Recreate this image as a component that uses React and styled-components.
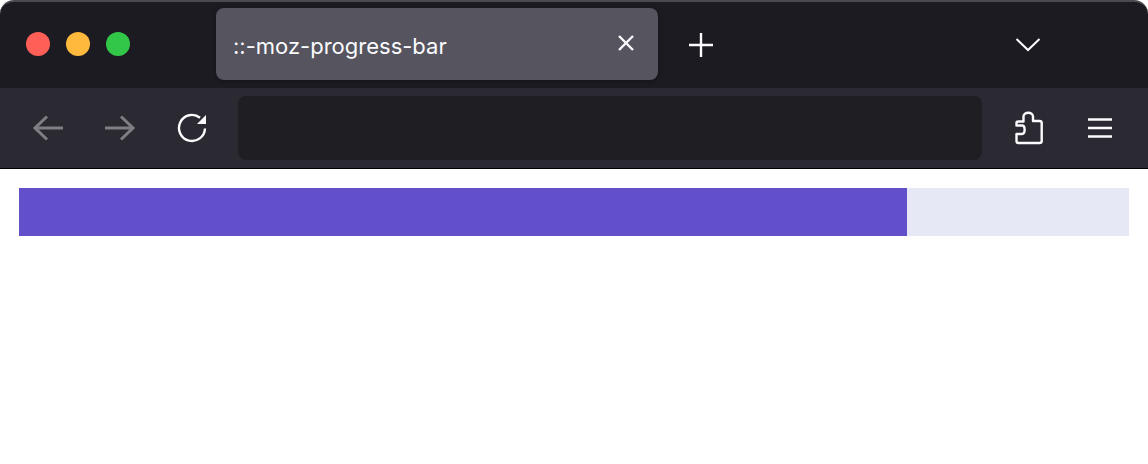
import React from "react";
import styled, { createGlobalStyle } from "styled-components";

const Global = createGlobalStyle`
  html, body { margin: 0; padding: 0; background: #fff; }
  body { font-family: Inter, "Liberation Sans", sans-serif; }
  * { box-sizing: border-box; }
`;

const Page = styled.div`width: 1148px; height: 464px; background: #fff; overflow: hidden;`;
const Chrome = styled.header`
  background: #1c1b22;
  border-radius: 14px 14px 0 0;
  overflow: hidden;
  border-top: 2px solid #4a4a50;
`;
const TabStrip = styled.div`
  height: 86px;
  display: flex;
  align-items: flex-start;
  padding: 6px 0 0 26px;
`;
const Lights = styled.div`display: flex; gap: 16px; margin-top: 24px; width: 190px;`;
const Light = styled.span`width: 24px; height: 24px; border-radius: 50%; background: ${p => p.$c};`;
const Tab = styled.div`
  width: 442px; height: 72px;
  background: #55545f;
  border-radius: 8px;
  box-shadow: 0 1px 4px rgba(0,0,0,.35);
  display: flex; align-items: center;
  padding: 4px 21px 0 17px;
  color: #fbfbfe;
  font-size: 22px;
  justify-content: space-between;
`;
const IconSlot = styled.span`
  display: flex; align-items: center; justify-content: center;
  width: ${p => p.$w || 40}px;
  height: ${p => p.$h || 40}px;
  margin-left: ${p => p.$ml || 0}px;
  margin-top: ${p => p.$mt || 0}px;
  opacity: ${p => p.$dim ? 0.4 : 1};
  color: #fbfbfe;
  flex: none;
`;
const Toolbar = styled.div`
  height: 80px;
  background: #2b2a33;
  display: flex; align-items: center;
  padding-left: 28px;
`;
const Address = styled.div`
  width: 744px; height: 64px;
  background: #1e1e23;
  border-radius: 8px;
  margin-left: 26px;
`;
const Divider = styled.div`height: 1px; background: #000;`;
const Content = styled.main`padding: 19px 19px 0;`;
const Track = styled.div`height: 48px; background: #e7e8f5;`;
const Fill = styled.div`height: 100%; background: #6150c9;`;

const Svg = ({ size, children }) => (
  <svg width={size} height={size} viewBox={`0 0 ${size} ${size}`} fill="none" stroke="currentColor" strokeWidth="2.4">{children}</svg>
);

export default function App() {
  return (
    <Page>
      <Global />
      <Chrome>
        <TabStrip>
          <Lights>
            <Light $c="#ff5f57" />
            <Light $c="#ffb93c" />
            <Light $c="#32c748" />
          </Lights>
          <Tab>
            <span>::-moz-progress-bar</span>
            <IconSlot $w={22} $h={22} $mt={-6}>
              <Svg size={22}><path d="M4 4 L18 18 M18 4 L4 18" /></Svg>
            </IconSlot>
          </Tab>
          <IconSlot $w={28} $h={28} $ml={29} $mt={23}>
            <Svg size={28}><path d="M14 2 V26 M2 14 H26" /></Svg>
          </IconSlot>
          <IconSlot $w={28} $h={18} $ml={299} $mt={28}>
            <svg width="28" height="18" viewBox="0 0 28 18" fill="none" stroke="currentColor" strokeWidth="2"><path d="M2.5 3 L14 14 L25.5 3" /></svg>
          </IconSlot>
        </TabStrip>
        <Toolbar>
          <IconSlot $w={40} $h={40} $dim>
            <Svg size={40}><path d="M35 20 H7 M19 8.500 L7 20 L19 31.500" strokeWidth="3" /></Svg>
          </IconSlot>
          <IconSlot $w={40} $h={40} $ml={32} $dim>
            <Svg size={40}><path d="M5 20 H33 M21 8.500 L33 20 L21 31.500" strokeWidth="3" /></Svg>
          </IconSlot>
          <IconSlot $w={40} $h={40} $ml={32}>
            <svg width="40" height="40" viewBox="0 0 40 40" fill="none">
              <path d="M28 9.700 A13 13 0 1 0 33 20.500" stroke="currentColor" strokeWidth="2.400" />
              <path d="M34 7 V16 H25 Z" fill="currentColor" />
            </svg>
          </IconSlot>
          <Address />
          <IconSlot $w={40} $h={40} $ml={27}>
            <svg width="40" height="40" viewBox="0 0 40 40" fill="none" stroke="currentColor" strokeWidth="2.400" strokeLinejoin="round">
              <path d="M9.500 35 Q7.500 35 7.500 33 V26 H13 C16.500 26 16.500 17.500 13 17.500 H7.500 V15 Q7.500 13.500 9.500 13.500 H14.500 V8.500 C14.500 3.500 24 3.500 24 8.500 V13 H30.500 Q32.700 13 32.700 15 V33 Q32.700 35 30.500 35 Z" />
            </svg>
          </IconSlot>
          <IconSlot $w={40} $h={40} $ml={31}>
            <svg width="40" height="40" viewBox="0 0 40 40" fill="none" stroke="currentColor" strokeWidth="2.400">
              <path d="M8 11.500 H32 M8 20 H32 M8 28.500 H32" />
            </svg>
          </IconSlot>
        </Toolbar>
      </Chrome>
      <Divider />
      <Content>
        <Track><Fill style={{ width: `${(888 / 1110) * 100}%` }} /></Track>
      </Content>
    </Page>
  );
}
